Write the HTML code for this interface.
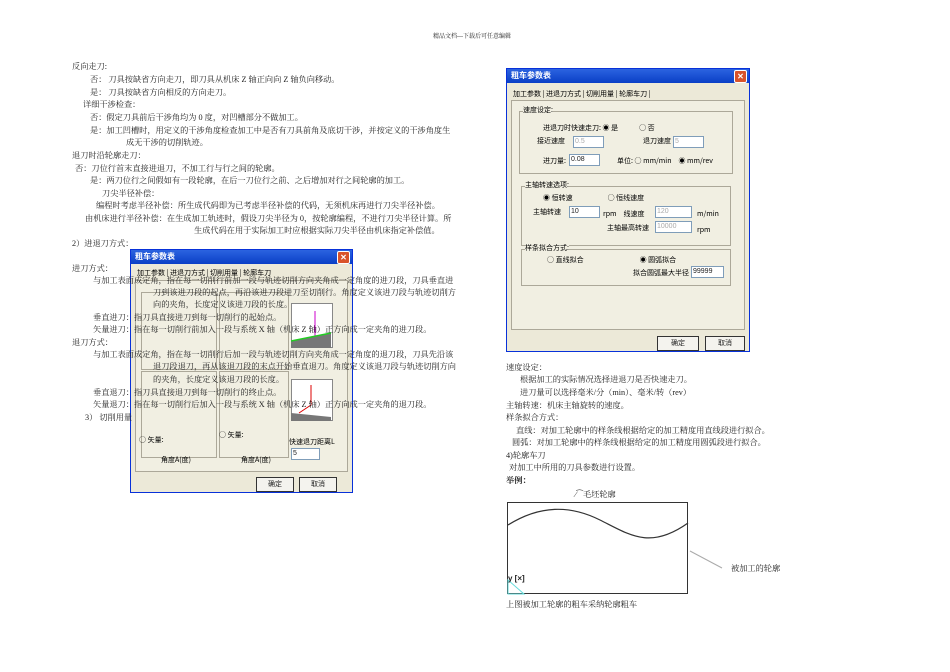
<!DOCTYPE html><html><head><meta charset="utf-8"><style>
body{margin:0;width:950px;height:672px;background:#fff;position:relative;overflow:hidden;font-family:"Liberation Serif","Noto Serif CJK SC","Noto Sans CJK SC",serif;color:#222}
.t{position:absolute;font-size:8.2px;line-height:10px;white-space:nowrap}
.dlg{position:absolute;background:#ece9d8;border:1px solid #0831d9}
.tb{background:linear-gradient(#2b63e0,#0a3fc6);color:#fff;font:bold 8px "Noto Sans CJK SC",sans-serif;height:14px;line-height:14px;padding-left:4px;position:relative}
.x{position:absolute;right:2px;top:1px;width:11px;height:11px;background:#d9532a;border:1px solid #fff;border-radius:2px;color:#fff;font-size:8px;line-height:11px;text-align:center}
.s{position:absolute;font:7px "Noto Sans CJK SC",sans-serif;color:#000;white-space:nowrap}
.g{position:absolute;border:1px solid #aca899}
.in{position:absolute;background:#fff;border:1px solid #7f9db9;font:7px "Liberation Sans",sans-serif;height:10px;line-height:10px;padding-left:1px}
.btn{position:absolute;border:1px solid #333;background:#f4f3ee;font:7px "Noto Sans CJK SC",sans-serif;text-align:center;line-height:13px;height:13px}
</style></head><body>
<div class="t" style="left:433px;top:32px;font-size:6px">精品文档---下载后可任意编辑</div>

<!-- left dialog -->
<div class="dlg" style="left:130px;top:249px;width:221px;height:242px">
<div class="tb">粗车参数表<div class="x">✕</div></div>
<div class="s" style="left:6px;top:18px">加工参数 | 进退刀方式 | 切削用量 | 轮廓车刀</div>
<div class="g" style="left:4px;top:30px;width:211px;height:190px;background:#f1efe2"></div>
<div class="g" style="left:10px;top:42px;width:74px;height:76px"></div>
<div class="g" style="left:88px;top:42px;width:68px;height:76px"></div>
<div style="position:absolute;left:160px;top:53px;width:40px;height:43px;background:#fff;border:1px solid #888"></div>
<svg style="position:absolute;left:160px;top:53px" width="42" height="45"><line x1="24" y1="8" x2="24" y2="34" stroke="#c0c"/><path d="M0 38 L40 30 L40 45 L0 45Z" fill="#777"/><line x1="0" y1="38" x2="40" y2="30" stroke="#2c2" stroke-width="1.5"/></svg>
<div class="g" style="left:10px;top:121px;width:74px;height:85px"></div>
<div class="g" style="left:88px;top:121px;width:68px;height:85px"></div>
<div style="position:absolute;left:160px;top:129px;width:40px;height:40px;background:#fff;border:1px solid #888"></div>
<svg style="position:absolute;left:160px;top:129px" width="42" height="42"><line x1="20" y1="6" x2="20" y2="26" stroke="#d00"/><line x1="20" y1="26" x2="8" y2="34" stroke="#d00"/><path d="M0 34 L40 38 L40 42 L0 42Z" fill="#777"/></svg>
<div class="s" style="left:8px;top:185px">○ 矢量:</div>
<div class="s" style="left:88px;top:180px">○ 矢量:</div>
<div class="s" style="left:30px;top:205px">角度A(度)</div>
<div class="s" style="left:110px;top:205px">角度A(度)</div>
<div class="s" style="left:158px;top:187px">快速退刀距离L</div>
<div class="in" style="left:160px;top:198px;width:26px">5</div>
<div class="btn" style="left:125px;top:227px;width:36px">确定</div>
<div class="btn" style="left:168px;top:227px;width:36px">取消</div>
</div>

<!-- right dialog -->
<div class="dlg" style="left:506px;top:68px;width:242px;height:282px">
<div class="tb">粗车参数表<div class="x">✕</div></div>
<div class="s" style="left:6px;top:20px">加工参数 | 进退刀方式 | 切削用量 | 轮廓车刀 |</div>
<div class="g" style="left:4px;top:31px;width:232px;height:228px;background:#f1efe2"></div>
<div class="g" style="left:12px;top:42px;width:212px;height:61px"></div>
<div class="s" style="left:16px;top:36px;background:#f1efe2">速度设定:</div>
<div class="s" style="left:36px;top:54px">进退刀时快速走刀: ◉ 是　　　○ 否</div>
<div class="s" style="left:30px;top:67px">接近速度</div><div class="in" style="left:66px;top:67px;width:28px;color:#aaa">0.5</div>
<div class="s" style="left:136px;top:67px">退刀速度</div><div class="in" style="left:166px;top:67px;width:28px;color:#aaa">5</div>
<div class="s" style="left:36px;top:87px">进刀量:</div><div class="in" style="left:62px;top:85px;width:28px">0.08</div>
<div class="s" style="left:110px;top:87px">单位: ○ mm/min　◉ mm/rev</div>
<div class="g" style="left:14px;top:117px;width:208px;height:58px"></div>
<div class="s" style="left:18px;top:111px;background:#f1efe2">主轴转速选项:</div>
<div class="s" style="left:36px;top:124px">◉ 恒转速　　　　　○ 恒线速度</div>
<div class="s" style="left:26px;top:138px">主轴转速</div><div class="in" style="left:62px;top:137px;width:28px">10</div>
<div class="s" style="left:96px;top:140px">rpm　线速度</div><div class="in" style="left:148px;top:137px;width:34px;color:#aaa">120</div><div class="s" style="left:190px;top:140px">m/min</div>
<div class="s" style="left:100px;top:154px">主轴最高转速</div><div class="in" style="left:148px;top:152px;width:34px;color:#aaa">10000</div><div class="s" style="left:190px;top:156px">rpm</div>
<div class="g" style="left:14px;top:180px;width:208px;height:35px"></div>
<div class="s" style="left:18px;top:174px;background:#f1efe2">样条拟合方式:</div>
<div class="s" style="left:40px;top:186px">○ 直线拟合　　　　　　　　◉ 圆弧拟合</div>
<div class="s" style="left:126px;top:199px">拟合圆弧最大半径</div><div class="in" style="left:184px;top:197px;width:30px">99999</div>
<div class="btn" style="left:150px;top:267px;width:40px">确定</div>
<div class="btn" style="left:198px;top:267px;width:38px">取消</div>
</div>

<!-- left text -->
<div class="t" style="left:72px;top:62px">反向走刀:</div>
<div class="t" style="left:90px;top:75px">否： 刀具按缺省方向走刀，即刀具从机床 Z 轴正向向 Z 轴负向移动。</div>
<div class="t" style="left:90px;top:88px">是： 刀具按缺省方向相反的方向走刀。</div>
<div class="t" style="left:83px;top:100px">详细干涉检查：</div>
<div class="t" style="left:90px;top:113px">否：假定刀具前后干涉角均为 0 度，对凹槽部分不做加工。</div>
<div class="t" style="left:90px;top:126px">是：加工凹槽时，用定义的干涉角度检查加工中是否有刀具前角及底切干涉，并按定义的干涉角度生</div>
<div class="t" style="left:126px;top:138px">成无干涉的切削轨迹。</div>
<div class="t" style="left:72px;top:151px">退刀时沿轮廓走刀：</div>
<div class="t" style="left:75px;top:164px">否：刀位行首末直接进退刀，不加工行与行之间的轮廓。</div>
<div class="t" style="left:90px;top:176px">是：两刀位行之间假如有一段轮廓，在后一刀位行之前、之后增加对行之间轮廓的加工。</div>
<div class="t" style="left:102px;top:189px">刀尖半径补偿：</div>
<div class="t" style="left:96px;top:201px">编程时考虑半径补偿：所生成代码即为已考虑半径补偿的代码，无须机床再进行刀尖半径补偿。</div>
<div class="t" style="left:85px;top:214px">由机床进行半径补偿：在生成加工轨迹时，假设刀尖半径为 0，按轮廓编程，不进行刀尖半径计算。所</div>
<div class="t" style="left:194px;top:226px">生成代码在用于实际加工时应根据实际刀尖半径由机床指定补偿值。</div>
<div class="t" style="left:72px;top:239px">2）进退刀方式：</div>
<div class="t" style="left:72px;top:264px">进刀方式：</div>
<div class="t" style="left:93px;top:276px">与加工表面成定角，指在每一切削行前加一段与轨迹切削方向夹角成一定角度的进刀段，刀具垂直进</div>
<div class="t" style="left:153px;top:288px">刀到该进刀段的起点，再沿该进刀段进刀至切削行。角度定义该进刀段与轨迹切削方</div>
<div class="t" style="left:153px;top:300px">向的夹角，长度定义该进刀段的长度。</div>
<div class="t" style="left:93px;top:313px">垂直进刀：指刀具直接进刀到每一切削行的起始点。</div>
<div class="t" style="left:93px;top:325px">矢量进刀：指在每一切削行前加入一段与系统 X 轴（机床 Z 轴）正方向成一定夹角的进刀段。</div>
<div class="t" style="left:72px;top:338px">退刀方式：</div>
<div class="t" style="left:93px;top:350px">与加工表面成定角，指在每一切削行后加一段与轨迹切削方向夹角成一定角度的退刀段，刀具先沿该</div>
<div class="t" style="left:153px;top:362px">退刀段退刀，再从该退刀段的末点开始垂直退刀。角度定义该退刀段与轨迹切削方向</div>
<div class="t" style="left:153px;top:375px">的夹角，长度定义该退刀段的长度。</div>
<div class="t" style="left:93px;top:388px">垂直退刀：指刀具直接退刀到每一切削行的终止点。</div>
<div class="t" style="left:93px;top:400px">矢量退刀：指在每一切削行后加入一段与系统 X 轴（机床 Z 轴）正方向成一定夹角的退刀段。</div>
<div class="t" style="left:85px;top:413px">3） 切削用量</div>

<!-- right text -->
<div class="t" style="left:506px;top:363px">速度设定：</div>
<div class="t" style="left:520px;top:375px">根据加工的实际情况选择进退刀是否快速走刀。</div>
<div class="t" style="left:520px;top:388px">进刀量可以选择毫米/分（min）、毫米/转（rev）</div>
<div class="t" style="left:506px;top:401px">主轴转速：机床主轴旋转的速度。</div>
<div class="t" style="left:506px;top:413px">样条拟合方式：</div>
<div class="t" style="left:516px;top:426px">直线：对加工轮廓中的样条线根据给定的加工精度用直线段进行拟合。</div>
<div class="t" style="left:512px;top:438px">圆弧：对加工轮廓中的样条线根据给定的加工精度用圆弧段进行拟合。</div>
<div class="t" style="left:506px;top:451px">4)轮廓车刀</div>
<div class="t" style="left:509px;top:463px">对加工中所用的刀具参数进行设置。</div>
<div class="t" style="left:506px;top:476px;font-weight:bold">举例：</div>
<div class="t" style="left:575px;top:490px">⁄⁀毛坯轮廓</div>
<svg style="position:absolute;left:500px;top:495px" width="300" height="110">
<rect x="7.5" y="7.5" width="180" height="91" fill="none" stroke="#333"/>
<path d="M8 30 C40 10,70 10,100 25 S150 55,188 28" fill="none" stroke="#333" stroke-width="1.2"/>
<line x1="190" y1="56" x2="222" y2="73" stroke="#aaa"/>
<path d="M8 85 L8 99 L24 99 Z" fill="none" stroke="#6dd"/>
</svg>
<div class="t" style="left:508px;top:574px;font:bold 8px 'Liberation Sans',sans-serif">y [×]</div>
<div class="t" style="left:731px;top:564px">被加工的轮廓</div>
<div class="t" style="left:506px;top:600px">上图被加工轮廓的粗车采纳轮廓粗车</div>
</body></html>
